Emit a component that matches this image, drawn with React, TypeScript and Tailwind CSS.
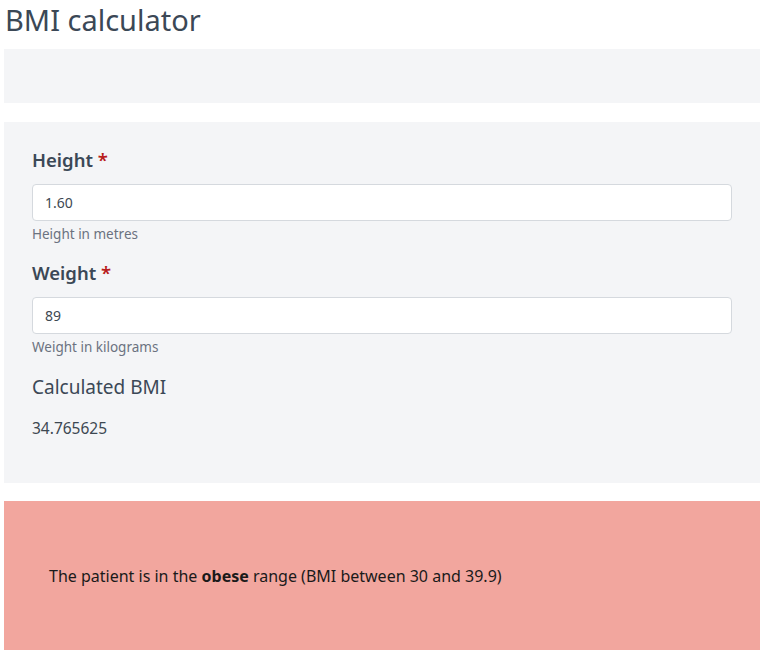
export default function App() {
  return (
    <div className="min-h-screen bg-white pl-[4px] pr-[7px] font-['Noto_Sans',sans-serif] text-[#3d4852]">
      <h1 className="pt-[1px] pl-[1px] text-[29px] leading-[38px] text-[#3b4856]">BMI calculator</h1>
      <div className="mt-[10px] h-[54px] bg-[#f4f5f7]" />
      <div className="mt-[19px] bg-[#f4f5f7] px-[28px] pt-[24px] pb-[43px]">
        <Field label="Height" value="1.60" help="Height in metres" />
        <div className="mt-[15px]">
          <Field label="Weight" value="89" help="Weight in kilograms" />
        </div>
        <div className="mt-[16px] text-[19px] leading-[28px] text-[#3b4856]">Calculated BMI</div>
        <div className="mt-[15px] text-[15.5px] leading-[24px] text-[#3d4852]">34.765625</div>
      </div>
      <div className="mt-[18px] flex h-[149px] items-center bg-[#f2a69e] pl-[45px] text-[16px] text-[#1a1a1a]">
        <p>
          The patient is in the <b className="font-bold">obese</b> range (BMI between 30 and 39.9)
        </p>
      </div>
    </div>
  );
}

function Field({ label, value, help }: { label: string; value: string; help: string }) {
  return (
    <div>
      <label className="block text-[18.5px] leading-[28px] font-semibold text-[#3b4856]">
        {label} <span className="text-[#b91c1c]">*</span>
      </label>
      <div className="mt-[10px] flex h-[37px] items-center rounded-[4px] border border-[#d5d9de] bg-white px-[12px] text-[14px] text-[#3d4852]">
        {value}
      </div>
      <div className="mt-[3px] text-[13.5px] leading-[20px] text-[#6b7280]">{help}</div>
    </div>
  );
}
